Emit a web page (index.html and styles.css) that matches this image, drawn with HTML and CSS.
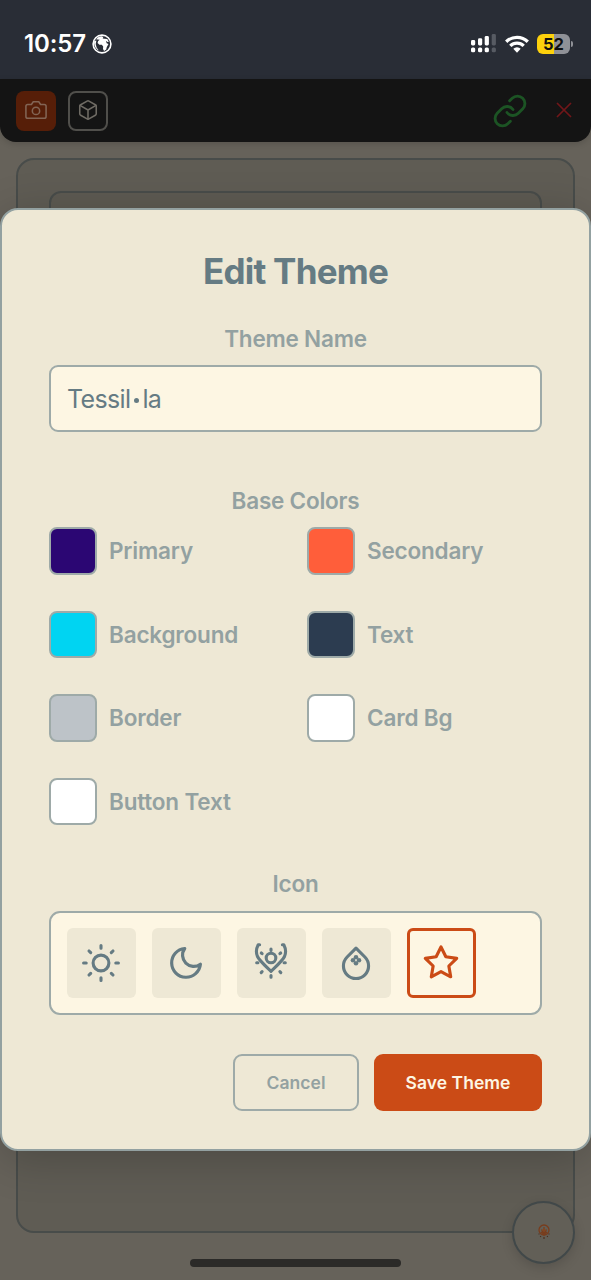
FILE: index.html
```
<!DOCTYPE html>
<html lang="en">
<head>
<meta charset="utf-8">
<title>Edit Theme</title>
<link rel="stylesheet" href="styles.css">
</head>
<body>
<div class="screen">
  <div class="status">
    <div class="status-left">
      <span class="clock">10:57</span>
      <svg class="globe" viewBox="0 0 20 20"><circle cx="10" cy="10" r="8.9" fill="none" stroke="#fff" stroke-width="1.6"/><path fill="#fff" d="M4 5.2 6.500 3l3-.7 1.800.8-.6 1.300 1.900.4 2.700.1 1.500 2.800-1.300.3-1.600-1.200.8 2.400 1.800.7-1.700 3-.6 2.600-2.100 1.500-1.100-1.900.2-2.700-1.400-1.600-2.400-.1-1.800-1.600.5-2.100 1.600-1.300-2-.3z"/><path fill="#fff" d="m2.200 7 2.200-.6-.7 3.500.9 3.500 2.200 3.200C3.800 15 1.600 11.500 2.200 7z"/></svg>
    </div>
    <div class="status-right">
      <svg class="signal" viewBox="0 0 25 19"><g fill="#fff"><rect y="6" width="4.200" height="5.500" rx="1.400"/><rect x="7" y="4.200" width="4.200" height="7.300" rx="1.400"/><rect x="13.700" y="2" width="4.200" height="9.500" rx="1.400"/><rect y="13.500" width="4.200" height="4.700" rx="1.500"/><rect x="7" y="13.500" width="4.200" height="4.700" rx="1.500"/><rect x="13.700" y="13.500" width="4.200" height="4.700" rx="1.500"/></g><g fill="#575b63"><rect x="20.700" y="0" width="4.200" height="11.500" rx="1.400"/><rect x="20.700" y="13.500" width="4.200" height="4.700" rx="1.500"/></g></svg>
      <svg class="wifi" viewBox="0 0 24 18"><g fill="none" stroke="#fff" stroke-width="3.300"><path d="M1.200 6.700a15.500 15.500 0 0 1 21.600 0"/><path d="M5.300 10.900a9.600 9.600 0 0 1 13.400 0"/></g><path fill="#fff" d="M8.300 13.800a5.300 5.300 0 0 1 7.400 0L12 17.700z"/></svg>
      <div class="battery"><span class="battery-body">52</span><span class="battery-tip"></span></div>
    </div>
  </div>
  <header class="toolbar">
    <div class="tool tool-camera"><svg viewBox="0 0 24 24"><path d="M23 19a2 2 0 0 1-2 2H3a2 2 0 0 1-2-2V8a2 2 0 0 1 2-2h4l2-3h6l2 3h4a2 2 0 0 1 2 2z"/><circle cx="12" cy="13" r="4"/></svg></div>
    <div class="tool tool-cube"><svg viewBox="0 0 24 24"><path d="M21 16V8a2 2 0 0 0-1-1.730l-7-4a2 2 0 0 0-2 0l-7 4A2 2 0 0 0 3 8v8a2 2 0 0 0 1 1.730l7 4a2 2 0 0 0 2 0l7-4A2 2 0 0 0 21 16z"/><path d="M3.270 6.960 12 12.010l8.730-5.050M12 22.080V12"/></svg></div>
    <svg class="link" viewBox="0 0 24 24"><path d="M10 13a5 5 0 0 0 7.540.540l3-3a5 5 0 0 0-7.070-7.070l-1.720 1.710"/><path d="M14 11a5 5 0 0 0-7.540-.540l-3 3a5 5 0 0 0 7.070 7.070l1.710-1.710"/></svg>
    <svg class="close" viewBox="0 0 16 16"><path d="M1 1l14 14M15 1 1 15"/></svg>
  </header>
  <main class="page"><section class="card"><div class="card-inner"></div></section></main>

  <div class="modal">
    <h1 class="title"><span>Edit Theme</span></h1>
    <div class="label label-name">Theme Name</div>
    <div class="input">Tessil<i class="dot"></i>la</div>
    <div class="label label-colors">Base Colors</div>
    <div class="colors">
      <div class="color"><span class="swatch primary"></span><span>Primary</span></div>
      <div class="color"><span class="swatch secondary"></span><span>Secondary</span></div>
      <div class="color"><span class="swatch background"></span><span>Background</span></div>
      <div class="color"><span class="swatch text"></span><span>Text</span></div>
      <div class="color"><span class="swatch border"></span><span>Border</span></div>
      <div class="color"><span class="swatch white"></span><span>Card Bg</span></div>
      <div class="color"><span class="swatch white"></span><span>Button Text</span></div>
    </div>
    <div class="label label-icon">Icon</div>
    <div class="icons">
      <div class="tile"><svg viewBox="0 0 40 40"><circle cx="20" cy="20" r="7.900"/><path d="M20 2.600v2.600M20 34.800v2.600M2.600 20h2.600M34.800 20h2.600M8 8l1.700 1.700M30.300 30.300l1.700 1.700M8 32l1.700-1.700M30.300 9.700l1.700-1.700"/></svg></div>
      <div class="tile"><svg viewBox="0 0 40 40"><path class="scaled" transform="translate(.8 .7) scale(1.600)" d="M21 12.790A9 9 0 1 1 11.210 3 7 7 0 0 0 21 12.790z"/></svg></div>
      <div class="tile"><svg viewBox="0 0 40 40"><path d="M8.600 1.800H7.200C5.300 5.500 4.700 9.500 6.500 13.500C8.300 17.500 14 22.500 20 28.300C26 22.500 31.700 17.500 33.500 13.500C35.300 9.500 34.700 5.500 32.800 1.800H31.400"/><circle cx="20" cy="15" r="4.800"/><path d="M20 6v1.500M20 32.500v1.700M10.300 10l.8.7M29.700 10l-.8.7M5.700 19.700h1.200M34.300 19.700h-1.200M10.200 29.600l.9-.9M29.800 29.600l-.9-.9"/></svg></div>
      <div class="tile"><svg viewBox="0 0 40 40"><path class="scaled" transform="translate(1.160 .9) scale(1.570)" d="M12 2.690l5.660 5.660a8 8 0 1 1-11.310 0z"/><g class="petals"><circle cx="20" cy="14.300" r="2.300"/><circle cx="20" cy="20.300" r="2.300"/><circle cx="17" cy="17.300" r="2.300"/><circle cx="23" cy="17.300" r="2.300"/></g><circle class="petal-eye" cx="20" cy="17.300" r=".9"/></svg></div>
      <div class="tile selected"><svg viewBox="0 0 40 40"><path class="scaled" transform="translate(1.160 .8) scale(1.570)" d="M12 2l3.090 6.260L22 9.270l-5 4.870 1.180 6.880L12 17.770l-6.180 3.250L7 14.140 2 9.270l6.910-1.010z"/></svg></div>
    </div>
    <div class="actions">
      <button class="btn cancel">Cancel</button>
      <button class="btn save">Save Theme</button>
    </div>
  </div>

  <div class="fab"><svg viewBox="0 0 14 16"><circle cx="7" cy="6" r="5" fill="none" stroke="#793d1d" stroke-width="1.300"/><path d="M7 3v8M4.500 5.500 7 11l2.500-5.500M4 8l3 2.500L10 8" fill="none" stroke="#793d1d" stroke-width="1.200"/><circle cx="7" cy="6" r="1.500" fill="#85451e"/><path d="M7 13v2M4 12l-.8 1M10 12l.8 1M1.500 10h1M11.500 10h1" stroke="#4e2a18" stroke-width="1.100"/></svg></div>
  <div class="home-bar"></div>
</div>
</body>
</html>
```
FILE: styles.css
```
* { box-sizing: border-box; }
body { margin: 0; font-family: Inter, "Liberation Sans", sans-serif; }
svg { display: block; flex: none; overflow: visible; }
.screen { position: relative; width: 591px; height: 1280px; overflow: hidden; display: flex; flex-direction: column; background: #66625a; }

.status { height: 79px; flex: none; background: #292d36; display: flex; justify-content: space-between; padding: 28px 18px 0 24px; }
.status-left, .status-right { display: flex; align-items: center; height: 31px; }
.clock { color: #fff; font-size: 24px; font-weight: 600; letter-spacing: -.1px; }
.globe { width: 20px; height: 20px; margin-left: 6px; }
.signal { width: 25px; height: 19px; }
.wifi { width: 24px; height: 18px; margin: 0 8px 0 9px; }
.battery { display: flex; align-items: center; gap: 1px; }
.battery-body { width: 33px; height: 20px; border-radius: 6px; background: linear-gradient(90deg, #fdd10c 52%, #8f9197 52%); color: #111; font-size: 16.5px; font-weight: 700; line-height: 20px; text-align: center; }
.battery-tip { width: 2px; height: 6px; border-radius: 0 2px 2px 0; background: #8f9197; }

.toolbar { height: 63px; flex: none; background: #141414; border-radius: 0 0 16px 16px; box-shadow: 0 2px 6px rgba(0,0,0,.15); display: flex; align-items: center; padding: 0 19px 0 16px; }
.tool { width: 40px; height: 40px; border-radius: 8px; display: flex; align-items: center; justify-content: center; }
.tool svg { width: 22px; height: 22px; margin-top: -2px; fill: none; stroke: #6f6b64; stroke-width: 1.7; stroke-linecap: round; stroke-linejoin: round; }
.tool-camera { background: #561e08; }
.tool-camera svg { stroke: #826454; }
.tool-cube { margin-left: 12px; border: 2px solid #504f4b; }
.link { width: 36px; height: 36px; margin-left: auto; fill: none; stroke: #1c5424; stroke-width: 1.9; stroke-linecap: round; stroke-linejoin: round; }
.close { width: 16px; height: 16px; margin-left: 28px; margin-top: -1px; fill: none; stroke: #701619; stroke-width: 1.7; }

.page { padding: 16px 16px 0; }
.card { height: 1075px; border: 2px solid #484c4a; border-radius: 18px; background: #5f5c54; padding: 31px 31px 0; }
.card-inner { height: 900px; border: 2px solid #484c4a; border-radius: 12px; background: #5d5a52; }

.modal { position: absolute; left: 0; top: 208px; width: 591px; height: 943px; padding: 37px 47px 0; border: 2px solid #93a1a1; border-radius: 18px; background: #eee8d5; box-shadow: 0 8px 46px rgba(0,0,0,.2); color: #93a1a1; }
.title { margin: 0 0 29px; height: 48px; line-height: 48px; font-size: 35px; font-weight: 700; color: #657b83; text-align: center; letter-spacing: -.75px; }
.label { height: 30px; line-height: 30px; font-size: 22.5px; font-weight: 600; letter-spacing: -.22px; text-align: center; }
.label-name { margin-bottom: 11px; }
.input { height: 67px; border: 2px solid #9eaaa8; border-radius: 9px; background: #fdf6e3; color: #657b83; font-size: 25px; padding-left: 16px; display: flex; align-items: center; letter-spacing: -.65px; }
.dot { width: 5px; height: 5px; border-radius: 50%; background: currentColor; margin: 3px 3px 0 4px; }
.label-colors { margin: 54px 0 11px; }
.colors { display: grid; grid-template-columns: 1fr 1fr; grid-auto-rows: 47.5px; gap: 36px 23px; }
.color { display: flex; align-items: center; gap: 12.5px; font-size: 22.5px; font-weight: 600; letter-spacing: -.18px; }
.swatch { width: 47.5px; height: 47.5px; border: 2px solid #9eaaa8; border-radius: 8px; }
.primary { background: #2b0673; }
.secondary { background: #ff5e3a; }
.background { background: #00d4f2; }
.text { background: #2c3c50; }
.border { background: #bdc3c8; }
.white { background: #fff; }
.label-icon { margin: 44px 0 11.5px; }
.icons { height: 104px; border: 2px solid #9eaaa8; border-radius: 11px; background: #fdf6e3; padding: 15.5px; display: flex; gap: 15.5px; }
.tile { width: 69.5px; height: 69.5px; border-radius: 6px; background: #eee8d5; display: flex; align-items: center; justify-content: center; }
.tile svg { width: 40px; height: 40px; fill: none; stroke: #657b83; stroke-width: 3.1; stroke-linecap: round; stroke-linejoin: round; }
.tile .scaled { stroke-width: 2; }
.tile .petals { fill: #657b83; stroke: none; }
.tile .petal-eye { fill: #d5d4c6; stroke: none; }
.tile.selected { background: #fdf6e3; border: 3px solid #cb4b16; }
.tile.selected svg { stroke: #cb4b16; }
.actions { margin-top: 39px; height: 57.5px; display: flex; justify-content: flex-end; gap: 15px; }
.btn { font: 600 17.5px Inter, sans-serif; letter-spacing: .05px; border-radius: 9px; padding: 0; }
.cancel { width: 126px; border: 2px solid #9eaaa8; background: transparent; color: #93a1a1; }
.save { width: 168px; border: 0; background: #cb4b16; color: #fdf6e3; }

.fab { position: absolute; left: 512px; top: 1201px; width: 63px; height: 63px; border: 2px solid #414849; border-radius: 50%; background: #625f57; box-shadow: 0 4px 12px rgba(0,0,0,.15); display: flex; align-items: center; justify-content: center; }
.fab svg { width: 14px; height: 16px; margin-top: -2px; }
.home-bar { position: absolute; left: 190px; top: 1259px; width: 211px; height: 8px; border-radius: 4px; background: #2b2a28; }
```
